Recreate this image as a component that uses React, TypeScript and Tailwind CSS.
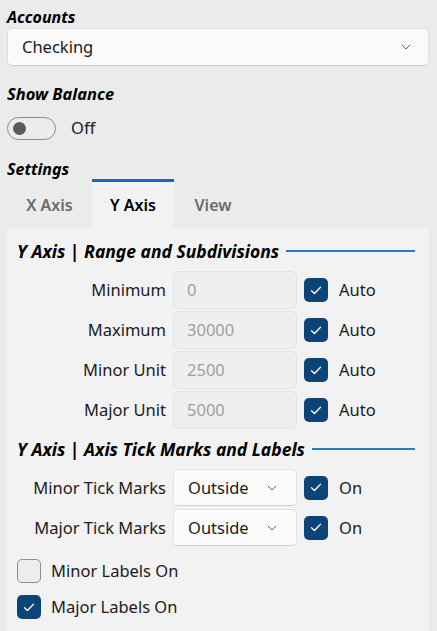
import { useState } from 'react';

// Settings panel: account picker, balance toggle, and tabbed axis options

const font = { fontFamily: '"Noto Sans", "Open Sans", Arial, sans-serif' };

function Chevron({ className = '' }: { className?: string }) {
  return (
    <svg viewBox="0 0 10 6" className={`h-[6px] w-[10px] ${className}`} fill="none">
      <path d="M1 1l4 4 4-4" stroke="#5f5f5f" strokeWidth="1" strokeLinecap="round" strokeLinejoin="round" />
    </svg>
  );
}

function Check({ checked, onClick }: { checked: boolean; onClick?: () => void }) {
  return (
    <button
      type="button"
      onClick={onClick}
      className={
        checked
          ? 'flex h-[24px] w-[24px] shrink-0 items-center justify-center rounded-[5px] bg-[#0d4477]'
          : 'flex h-[24px] w-[24px] shrink-0 items-center justify-center rounded-[5px] border border-[#8d8d8d] bg-[#ededed]'
      }
    >
      {checked && (
        <svg viewBox="0 0 12 10" className="h-[9px] w-[12px]" fill="none">
          <path d="M1 5.2l3.3 3.2L11 1.4" stroke="#fff" strokeWidth="1.4" strokeLinecap="round" strokeLinejoin="round" />
        </svg>
      )}
    </button>
  );
}

function SectionHeader({ title }: { title: string }) {
  return (
    <div className="flex items-center gap-[7px] pr-[14px]">
      <span className="text-[17.5px] font-bold italic leading-[24px] text-black">{title}</span>
      <span className="h-[2px] flex-1 bg-[#2a78c8]" />
    </div>
  );
}

const rangeRows = [
  { label: 'Minimum', value: '0' },
  { label: 'Maximum', value: '30000' },
  { label: 'Minor Unit', value: '2500' },
  { label: 'Major Unit', value: '5000' },
];

const tickRows = ['Minor Tick Marks', 'Major Tick Marks'];

const tabs = [
  { name: 'X Axis', width: 'w-[85px]' },
  { name: 'Y Axis', width: 'w-[82px]' },
  { name: 'View', width: 'w-[78px]' },
];

export default function App() {
  const [tab, setTab] = useState('Y Axis');
  const [minorLabels, setMinorLabels] = useState(false);
  const [majorLabels, setMajorLabels] = useState(true);

  return (
    <div style={font} className="h-[631px] w-[437px] overflow-hidden bg-[#ebebeb] pl-[7px] pr-[8px] pt-[6px] text-[16.5px] leading-[24px] text-[#1b1b1b]">
      <div className="text-[16px] font-bold italic leading-[22px] text-black">Accounts</div>
      <div className="flex h-[38px] items-center justify-between rounded-[5px] border border-[#dedede] border-b-[#c9c9c9] bg-[#fafafa] pl-[14px] pr-[17px]">
        <span>Checking</span>
        <Chevron />
      </div>

      <div className="mt-[17px] text-[16.5px] font-bold italic leading-[22px] text-black">Show Balance</div>
      <div className="mt-[11px] flex items-center gap-[15px]">
        <div className="flex h-[23px] w-[49px] items-center rounded-full border border-[#8a8a8a] bg-[#ececec] pl-[5px]">
          <span className="h-[13px] w-[13px] rounded-full bg-[#5b5b5b]" />
        </div>
        <span>Off</span>
      </div>

      <div className="mt-[18px] text-[16px] font-bold italic leading-[22px] text-black">Settings</div>

      <div className="-mt-[1px] flex h-[49px] items-stretch">
        {tabs.map((t) => (
          <button
            key={t.name}
            type="button"
            onClick={() => setTab(t.name)}
            className={
              tab === t.name
                ? `${t.width} border-t-[3px] border-[#1769c1] bg-[#f2f2f2] text-[16px] font-semibold text-black`
                : `${t.width} border-t-[3px] border-transparent text-[16px] font-semibold text-[#6a6a6a]`
            }
          >
            {t.name}
          </button>
        ))}
      </div>

      <div className="bg-[#f2f2f2] pb-[20px] pl-[10px] pt-[11px]">
        <SectionHeader title="Y Axis | Range and Subdivisions" />

        <div className="mt-[8px] flex flex-col gap-[2px]">
          {rangeRows.map((r) => (
            <div key={r.label} className="flex h-[38px] items-center">
              <span className="w-[149px] text-right">{r.label}</span>
              <div className="ml-[7px] flex h-[38px] w-[124px] items-center rounded-[5px] border border-[#e3e3e3] bg-[#efefef] pl-[13px] text-[#a0a0a0]">
                {r.value}
              </div>
              <div className="ml-[7px]">
                <Check checked />
              </div>
              <span className="ml-[11px]">Auto</span>
            </div>
          ))}
        </div>

        <div className="mt-[8px]">
          <SectionHeader title="Y Axis | Axis Tick Marks and Labels" />
        </div>

        <div className="mt-[8px] flex flex-col gap-[3px]">
          {tickRows.map((label) => (
            <div key={label} className="flex h-[37px] items-center">
              <span className="w-[149px] text-right">{label}</span>
              <div className="ml-[7px] flex h-[37px] w-[124px] items-center justify-between rounded-[5px] border border-[#e2e2e2] border-b-[#cfcfcf] bg-[#fbfbfb] pl-[14px] pr-[19px]">
                <span>Outside</span>
                <Chevron />
              </div>
              <div className="ml-[7px]">
                <Check checked />
              </div>
              <span className="ml-[11px]">On</span>
            </div>
          ))}
        </div>

        <div className="mt-[13px] flex items-center gap-[10px]">
          <Check checked={minorLabels} onClick={() => setMinorLabels(!minorLabels)} />
          <span>Minor Labels On</span>
        </div>
        <div className="mt-[12px] flex items-center gap-[10px]">
          <Check checked={majorLabels} onClick={() => setMajorLabels(!majorLabels)} />
          <span>Major Labels On</span>
        </div>
      </div>
    </div>
  );
}
